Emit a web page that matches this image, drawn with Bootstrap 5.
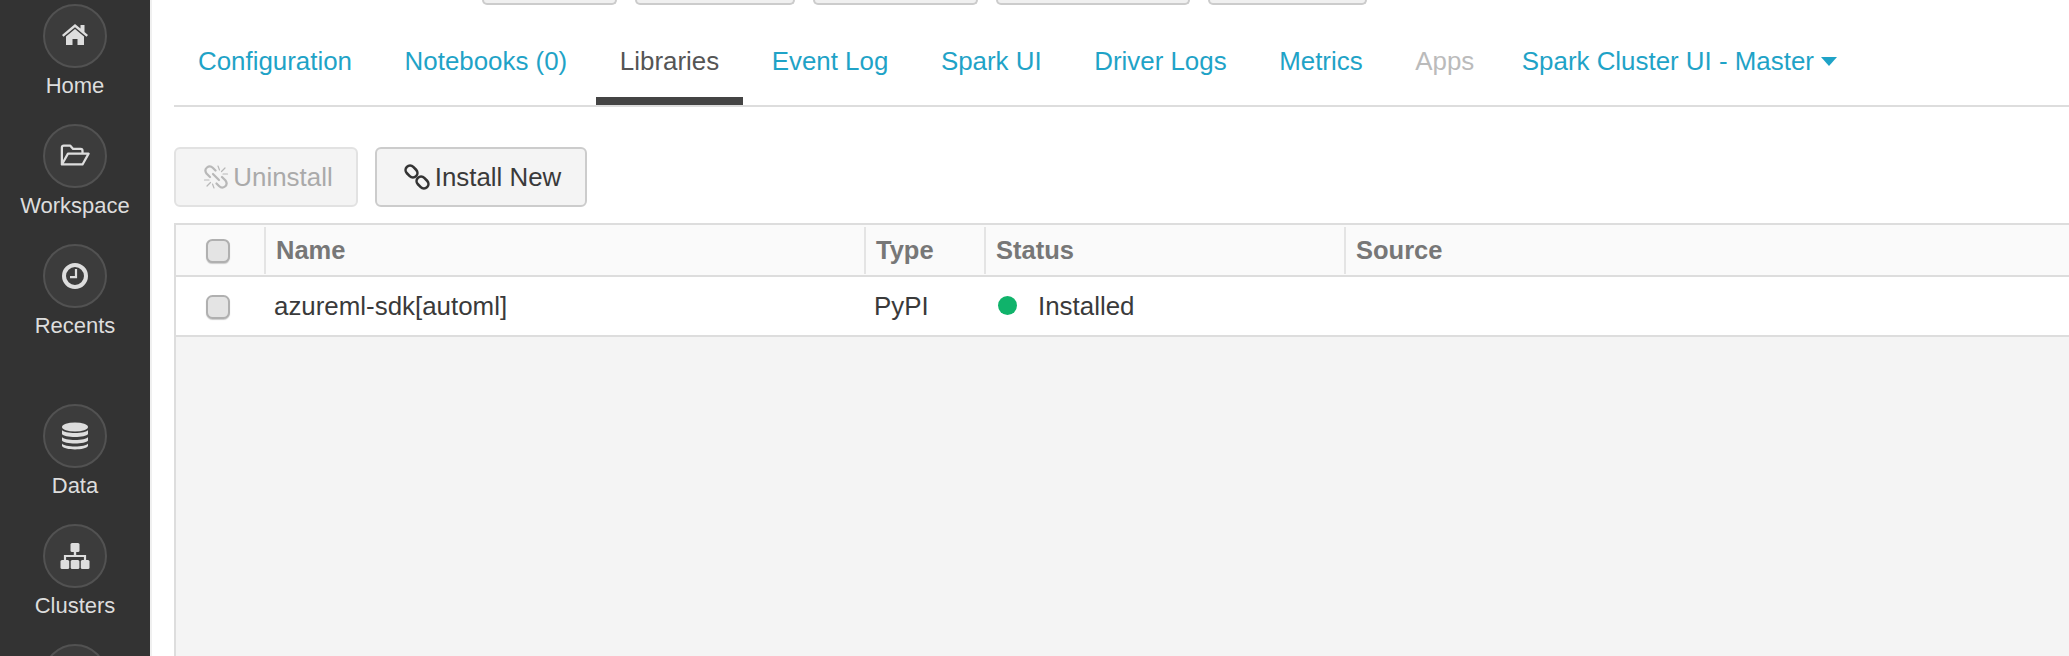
<!DOCTYPE html>
<html lang="en">
<head>
    <meta charset="UTF-8">
    <title>Cluster Libraries</title>
    <link rel="stylesheet" href="https://cdn.jsdelivr.net/npm/bootstrap@5.3.0/dist/css/bootstrap.min.css">
    <style>
        html, body { height: 100%; }
        body { font-family: "Liberation Sans", Arial, sans-serif; font-size: 26px; color: #333; overflow: hidden; background: #fff; }
        .side-rail { width: 152px; flex: none; background: #333; border-right: 2px solid #f0f0f0; padding-top: 4px; overflow: hidden; }
        .rail-item { height: 120px; flex: none; color: #ddd; font-size: 22px; line-height: 36px; }
        .rail-gap { height: 40px; }
        .rail-circle { width: 64px; height: 64px; flex: none; border-radius: 50%; background: #3c3c3c; border: 2px solid #525252; }
        .rail-circle svg { width: 30px; height: 30px; fill: #ddd; }
        .main-pane { min-width: 0; padding-left: 22px; }
        .top-stubs { height: 5px; margin-left: 308px; gap: 18px; }
        .top-stub { height: 5px; background: #f0f0f0; border: 2px solid #ccc; border-top: 0; border-radius: 0 0 6px 6px; }
        .tab-strip { height: 102px; gap: 4.6px; border-bottom: 2px solid #ddd; }
        .tab-strip .nav-link { height: 100px; padding: 39px 24px 0; font-size: 25.9px; line-height: 35px; color: #1fa3c7; border-bottom: 8px solid transparent; }
        .tab-strip .nav-link.active { color: #555; border-bottom-color: #444; }
        .tab-strip .nav-link.disabled { color: #bbb; }
        .tab-last { margin-left: -5px; }
        .tab-caret { display: inline-block; margin-left: 7px; vertical-align: 4px; border-left: 8px solid transparent; border-right: 8px solid transparent; border-top: 9px solid #1fa3c7; }
        .action-row { gap: 17px; padding: 40px 0 16px; }
        .action-btn { height: 60px; padding: 0; font-size: 25.9px; color: #3a3a3a; background: #f4f4f4; border: 2px solid #ccc; border-radius: 6px; --bs-btn-disabled-opacity: 1; }
        .action-btn svg { width: 26px; height: 26px; margin-right: 5px; flex: none; }
        .action-btn:disabled { color: #aaa; background: #f4f4f4; border-color: #e2e2e2; }
        .btn-uninstall { width: 184px; padding-left: 4px; }
        .btn-uninstall svg { margin-right: 4px; }
        .btn-install { width: 212px; padding-left: 3px; }
        .lib-table-wrap { border-left: 2px solid #ddd; background: #f4f4f4; min-height: 0; }
        .lib-table { table-layout: fixed; width: 100%; margin: 0; --bs-table-bg: transparent; border-collapse: separate; border-spacing: 0; }
        .lib-table th, .lib-table td { border: 0; }
        .lib-table thead th { height: 54px; padding: 0; background: #fafafa; border-top: 2px solid #ddd; border-bottom: 2px solid #ddd; font-size: 25.5px; font-weight: 700; color: #777; vertical-align: middle; }
        .th-inner { height: 47px; line-height: 47px; padding-left: 10px; border-left: 2px solid #e4e4e4; }
        .lib-table tbody td { height: 60px; padding: 0 0 0 10px; background: #fff; border-bottom: 2px solid #ddd; font-size: 25.9px; color: #3a3a3a; vertical-align: middle; }
        .lib-table tbody td.cell-check, .lib-table thead th.cell-check { padding: 0 0 2px; text-align: center; }
        .lib-check { width: 24px; height: 24px; margin: 0 0 0 -5px; float: none; vertical-align: middle; background-color: #e4e4e4; border: 2px solid #b0b0b0; border-radius: 4px; box-shadow: 0 1px 1px #ccc; }
        .status-dot { width: 19px; height: 19px; border-radius: 50%; background: #10b36b; margin: 0 21px 0 4px; }
    </style>
</head>
<body class="d-flex">

    <nav class="side-rail d-flex flex-column align-items-center">
        <div class="rail-item d-flex flex-column align-items-center">
            <div class="rail-circle d-flex align-items-center justify-content-center">
                <svg viewBox="0 0 30 30"><path d="M15 3 L2 14 L3.500 15.800 L15 6.200 L26.500 15.800 L28 14 L24.500 11 V4 H20.500 V7.600 Z"/><path d="M15 8 L6 15.500 V24 H12.500 V18 H17.500 V24 H24 V15.500 Z"/></svg>
            </div>
            <span>Home</span>
        </div>
        <div class="rail-item d-flex flex-column align-items-center">
            <div class="rail-circle d-flex align-items-center justify-content-center">
                <svg viewBox="0 0 32 30"><path fill="none" stroke="#ddd" stroke-width="2.400" stroke-linejoin="round" d="M2 24 V6 Q2 4 4 4 H11 L14 7.500 H22 Q24 7.500 24 9.500 V12 M2 24 H24 L30.500 12.500 H8.500 L2 24 Z"/></svg>
            </div>
            <span>Workspace</span>
        </div>
        <div class="rail-item d-flex flex-column align-items-center">
            <div class="rail-circle d-flex align-items-center justify-content-center">
                <svg viewBox="0 0 30 30"><circle cx="15" cy="15" r="11" fill="none" stroke="#ddd" stroke-width="4"/><path fill="none" stroke="#ddd" stroke-width="2.200" d="M16 8 V16.200 H10"/></svg>
            </div>
            <span>Recents</span>
        </div>
        <div class="rail-gap flex-shrink-0"></div>
        <div class="rail-item d-flex flex-column align-items-center">
            <div class="rail-circle d-flex align-items-center justify-content-center">
                <svg viewBox="0 0 30 30"><ellipse cx="15" cy="6" rx="13" ry="4.500"/><path d="M2 9 C4 13 26 13 28 9 V13 C26 17 4 17 2 13 Z"/><path d="M2 16 C4 20 26 20 28 16 V19.500 C26 23.500 4 23.500 2 19.500 Z"/><path d="M2 22.500 C4 26.500 26 26.500 28 22.500 V25 C26 29.500 4 29.500 2 25 Z"/></svg>
            </div>
            <span>Data</span>
        </div>
        <div class="rail-item d-flex flex-column align-items-center">
            <div class="rail-circle d-flex align-items-center justify-content-center">
                <svg viewBox="0 0 30 30"><rect x="10.500" y="2" width="9" height="9" rx="1.500"/><rect x="13.800" y="10" width="2.400" height="6"/><path fill="none" stroke="#ddd" stroke-width="2.200" d="M5 20 V15 H25 V20"/><rect x="0.500" y="19" width="8.700" height="9" rx="1.500"/><rect x="10.700" y="19" width="8.700" height="9" rx="1.500"/><rect x="20.800" y="19" width="8.700" height="9" rx="1.500"/></svg>
            </div>
            <span>Clusters</span>
        </div>
        <div class="rail-item d-flex flex-column align-items-center">
            <div class="rail-circle"></div>
        </div>
    </nav>

    <main class="main-pane flex-grow-1 d-flex flex-column">
        <div class="top-stubs d-flex">
            <div class="top-stub" style="width: 135px"></div>
            <div class="top-stub" style="width: 160px"></div>
            <div class="top-stub" style="width: 165px"></div>
            <div class="top-stub" style="width: 194px"></div>
            <div class="top-stub" style="width: 159px"></div>
        </div>

        <ul class="nav tab-strip flex-shrink-0">
            <li class="nav-item"><a class="nav-link" href="#">Configuration</a></li>
            <li class="nav-item"><a class="nav-link" href="#">Notebooks (0)</a></li>
            <li class="nav-item"><a class="nav-link active" href="#">Libraries</a></li>
            <li class="nav-item"><a class="nav-link" href="#">Event Log</a></li>
            <li class="nav-item"><a class="nav-link" href="#">Spark UI</a></li>
            <li class="nav-item"><a class="nav-link" href="#">Driver Logs</a></li>
            <li class="nav-item"><a class="nav-link" href="#">Metrics</a></li>
            <li class="nav-item"><a class="nav-link disabled" href="#">Apps</a></li>
            <li class="nav-item tab-last"><a class="nav-link" href="#">Spark Cluster UI - Master<span class="tab-caret"></span></a></li>
        </ul>

        <div class="action-row d-flex flex-shrink-0">
            <button class="btn action-btn btn-uninstall d-flex align-items-center justify-content-center" disabled>
                <svg viewBox="0 0 26 26" fill="none" stroke="#b8b8b8" stroke-width="2.200" stroke-linecap="round"><path d="M7 13 L3.500 9.500 Q1 6 4 3.500 Q7 1 10 4 L12.500 6.500"/><path d="M19 13 L22.500 16.500 Q25 20 22 22.500 Q19 25 16 22 L13.500 19.500"/><path d="M10 10 L16 16"/><path stroke-width="1.200" d="M15 2 L16.500 6 M22 4 L18.500 7.500 M24.500 10 L20 10 M1.500 16 L6 16 M4 22 L7.500 18.500 M11 24 L9.500 20"/></svg>
                Uninstall
            </button>
            <button class="btn action-btn btn-install d-flex align-items-center justify-content-center">
                <svg viewBox="0 0 26 26" fill="none" stroke="#333" stroke-width="2.600"><rect x="1" y="3" width="13" height="9" rx="4.500" transform="rotate(45 7.500 7.500)"/><rect x="12" y="14" width="13" height="9" rx="4.500" transform="rotate(45 18.500 18.500)"/></svg>
                Install New
            </button>
        </div>

        <div class="lib-table-wrap flex-grow-1">
            <table class="table lib-table">
                <colgroup>
                    <col style="width: 88px">
                    <col style="width: 600px">
                    <col style="width: 120px">
                    <col style="width: 360px">
                    <col>
                </colgroup>
                <thead>
                    <tr>
                        <th class="cell-check"><input class="form-check-input lib-check" type="checkbox"></th>
                        <th><div class="th-inner">Name</div></th>
                        <th><div class="th-inner">Type</div></th>
                        <th><div class="th-inner">Status</div></th>
                        <th><div class="th-inner">Source</div></th>
                    </tr>
                </thead>
                <tbody>
                    <tr>
                        <td class="cell-check"><input class="form-check-input lib-check" type="checkbox"></td>
                        <td>azureml-sdk[automl]</td>
                        <td>PyPI</td>
                        <td><div class="d-flex align-items-center"><span class="status-dot"></span>Installed</div></td>
                        <td></td>
                    </tr>
                </tbody>
            </table>
        </div>
    </main>

</body>
</html>
